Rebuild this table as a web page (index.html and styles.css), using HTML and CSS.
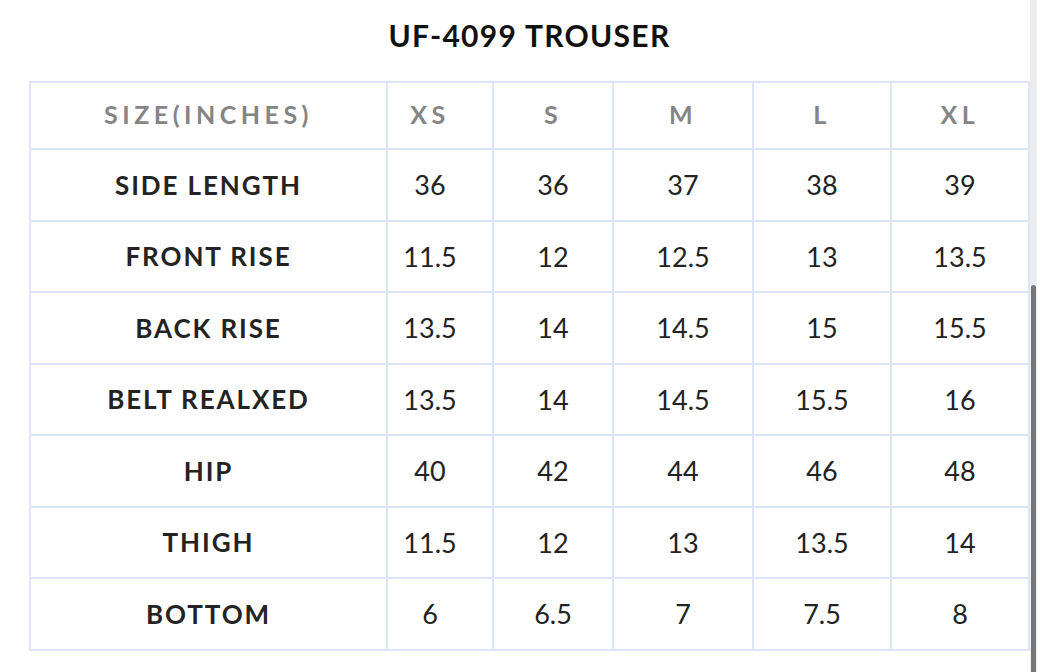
FILE: index.html
```html
<!DOCTYPE html>
<html lang="en">
<head>
<meta charset="utf-8">
<title>UF-4099 Trouser</title>
<link rel="stylesheet" href="styles.css">
</head>
<body>
<div class="page">
  <main class="content">
    <h1 class="title">UF-4099 TROUSER</h1>
    <table class="size-table">
      <colgroup>
        <col class="c-label"><col class="c-xs"><col class="c-s"><col class="c-m"><col class="c-l"><col class="c-xl">
      </colgroup>
      <thead>
        <tr class="head-row">
          <th>SIZE(INCHES)</th><th>XS</th><th>S</th><th>M</th><th>L</th><th>XL</th>
        </tr>
      </thead>
      <tbody>
        <tr><th>SIDE LENGTH</th><td>36</td><td>36</td><td>37</td><td>38</td><td>39</td></tr>
        <tr><th>FRONT RISE</th><td>11.5</td><td>12</td><td>12.5</td><td>13</td><td>13.5</td></tr>
        <tr><th>BACK RISE</th><td>13.5</td><td>14</td><td>14.5</td><td>15</td><td>15.5</td></tr>
        <tr><th>BELT REALXED</th><td>13.5</td><td>14</td><td>14.5</td><td>15.5</td><td>16</td></tr>
        <tr><th>HIP</th><td>40</td><td>42</td><td>44</td><td>46</td><td>48</td></tr>
        <tr><th>THIGH</th><td>11.5</td><td>12</td><td>13</td><td>13.5</td><td>14</td></tr>
        <tr><th>BOTTOM</th><td>6</td><td>6.5</td><td>7</td><td>7.5</td><td>8</td></tr>
      </tbody>
    </table>
  </main>
  <div class="scrollbar"><div class="thumb"></div></div>
</div>
</body>
</html>
```
FILE: styles.css
```css
html, body {
  margin: 0;
  padding: 0;
  background: #ffffff;
  height: 100%;
  overflow: hidden;
}
.page {
  display: flex;
  height: 672px;
  font-family: "Lato", "Liberation Sans", sans-serif;
}
.content {
  width: 1001px;
  padding-left: 29px;
  flex: none;
}
.title {
  margin: 0;
  height: 81px;
  line-height: 70px;
  text-align: center;
  font-size: 30px;
  font-weight: 700;
  color: #111111;
  letter-spacing: 1.3px;
}
.size-table {
  border-collapse: collapse;
  table-layout: fixed;
  width: 1001px;
  border: 2px solid #dde5fb;
}
.size-table th, .size-table td {
  border: 2px solid #dde5fb;
  padding: 0;
  text-align: center;
  vertical-align: middle;
}
.size-table tr > :nth-child(2) {
  padding-right: 20px;
}
.c-label { width: 357px; }
.c-xs { width: 106px; }
.c-s { width: 120px; }
.c-m { width: 140px; }
.c-l { width: 138px; }
.c-xl { width: 138px; }
.head-row { height: 67px; }
.head-row th {
  font-size: 25px;
  font-weight: 700;
  color: #858585;
  letter-spacing: 4.5px;
  padding-bottom: 3px;
}
tbody tr { height: 71.5px; }
tbody th {
  font-size: 26px;
  font-weight: 700;
  color: #232323;
  letter-spacing: 1.9px;
}
tbody td {
  font-size: 27px;
  font-weight: 400;
  color: #232323;
}
.scrollbar {
  width: 7px;
  height: 672px;
  background: #ececec;
  flex: none;
  padding-top: 285px;
  box-sizing: border-box;
}
.thumb {
  width: 5px;
  margin-left: 1px;
  height: 400px;
  background: #777777;
  border-radius: 3px 3px 0 0;
}
```
